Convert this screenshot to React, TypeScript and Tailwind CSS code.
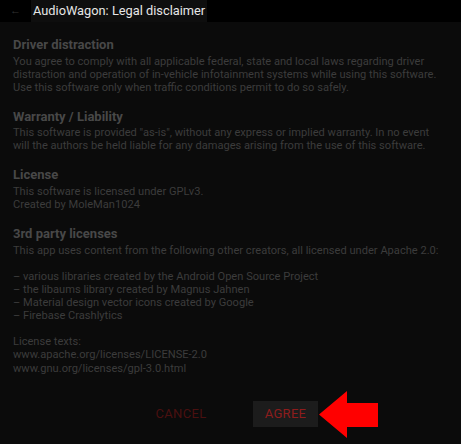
import React from 'react';

const Section = ({ title, children }: { title: string; children: React.ReactNode }) => (
  <div className="mb-[15px]">
    <h2 className="text-[13px] leading-[16px] font-bold text-[#484848] mb-[1.5px]">{title}</h2>
    <p className="text-[11.1px] leading-[13.1px] text-[#3c3c3c]">{children}</p>
  </div>
);

export default function App() {
  return (
    <div className="w-[461px] h-[444px] bg-[#0b0b0b] flex flex-col font-['Roboto',sans-serif] overflow-hidden">
      {/* title bar */}
      <div className="h-[22px] shrink-0 bg-black flex items-center">
        <span className="w-[31px] text-center text-[11px] text-[#333333]">←</span>
        <div className="h-full bg-[#0e0e0e] flex items-center px-[2px]">
          <span className="text-[12.8px] whitespace-nowrap text-[#e6e6e6]">AudioWagon: Legal disclaimer</span>
        </div>
      </div>

      <div className="px-[13px] pt-[15px] flex-1 min-h-0 overflow-hidden">
        <Section title="Driver distraction">
          You agree to comply with all applicable federal, state and local laws regarding driver
          <br />
          distraction and operation of in-vehicle infotainment systems while using this software.
          <br />
          Use this software only when traffic conditions permit to do so safely.
        </Section>
        <Section title="Warranty / Liability">
          This software is provided "as-is", without any express or implied warranty. In no event
          <br />
          will the authors be held liable for any damages arising from the use of this software.
        </Section>
        <Section title="License">
          This software is licensed under GPLv3.
          <br />
          Created by MoleMan1024
        </Section>
        <Section title="3rd party licenses">
          This app uses content from the following other creators, all licensed under Apache 2.0:
          <br />
          <br />
          – various libraries created by the Android Open Source Project
          <br />
          – the libaums library created by Magnus Jahnen
          <br />
          – Material design vector icons created by Google
          <br />
          – Firebase Crashlytics
          <br />
          <br />
          License texts:
          <br />
          www.apache.org/licenses/LICENSE-2.0
          <br />
          www.gnu.org/licenses/gpl-3.0.html
        </Section>
      </div>

      {/* buttons */}
      <div className="h-[60px] shrink-0 flex items-center pl-[140px]">
        <button className="w-[82px] h-[26px] text-[13px] text-[#4a1010] tracking-[0.3px]">CANCEL</button>
        <button className="ml-[31px] w-[65px] h-[26px] bg-[#1c1c1c] text-[13px] text-[#8e1c1c] tracking-[0.3px]">AGREE</button>
        <svg width="60" height="47" viewBox="0 0 60 47" className="ml-[1px]">
          <polygon points="0,23.5 28,0 28,12 59,12 59,36 28,36 28,47" fill="#ff0000" />
        </svg>
      </div>
    </div>
  );
}
